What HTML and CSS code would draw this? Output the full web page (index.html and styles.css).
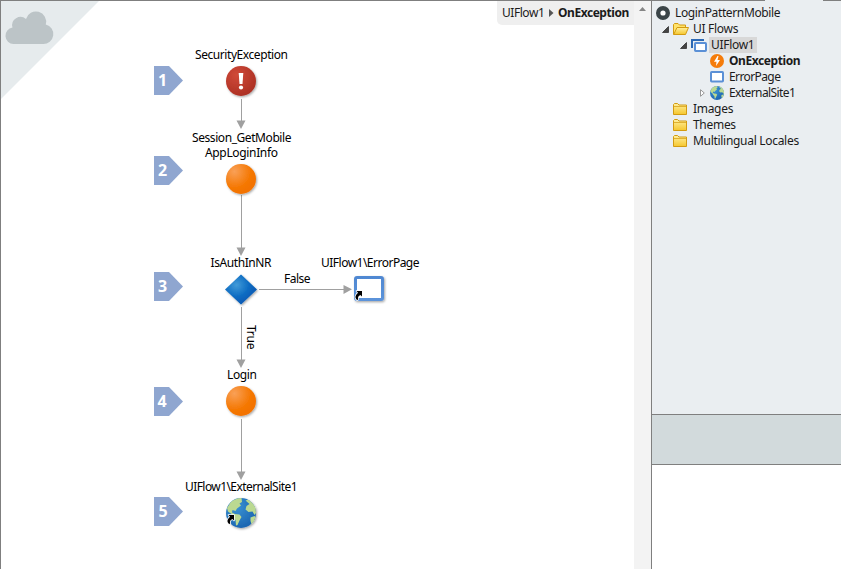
FILE: index.html
```html
<!DOCTYPE html>
<html lang="en">
<head>
<meta charset="utf-8">
<title>LoginPatternMobile</title>
<link rel="stylesheet" href="styles.css">
</head>
<body>
<svg width="0" height="0" class="defs">
  <defs>
    <radialGradient id="red" cx=".35" cy=".3" r=".75"><stop offset="0" stop-color="#d04a38"/><stop offset="1" stop-color="#ab2f23"/></radialGradient>
    <radialGradient id="orange" cx=".28" cy=".25" r=".7"><stop offset="0" stop-color="#f9a057"/><stop offset=".75" stop-color="#f57905"/><stop offset="1" stop-color="#f37300"/></radialGradient>
    <radialGradient id="blue" cx=".36" cy=".35" r=".6"><stop offset="0" stop-color="#429bd8"/><stop offset=".65" stop-color="#0c6bc2"/><stop offset="1" stop-color="#075cb6"/></radialGradient>
    <radialGradient id="sea" cx=".35" cy=".3" r=".75"><stop offset="0" stop-color="#3a93d3"/><stop offset="1" stop-color="#1a63b0"/></radialGradient>
    <linearGradient id="gold" x1="0" y1="0" x2="0" y2="1"><stop offset="0" stop-color="#fff0a0"/><stop offset="1" stop-color="#f5c62d"/></linearGradient>
    <linearGradient id="frame" x1="0" y1="0" x2="0" y2="1"><stop offset="0" stop-color="#5088d2"/><stop offset="1" stop-color="#5b93da"/></linearGradient>
    <filter id="shadow" x="-30%" y="-30%" width="170%" height="170%"><feDropShadow dx="1" dy="1.2" stdDeviation="1.3" flood-opacity=".35"/></filter>
    <symbol id="globe" viewBox="0 0 30 30">
      <circle cx="15" cy="15" r="15" fill="url(#sea)"/>
      <path fill="#bbd991" d="M4.500 4.500Q9 .2 15.500 0L16 4 13.500 5.500 15 7.500 11 10.500 9.500 13 6.500 12 6 14.500 9 16 13.500 16.500 15.500 19 13.500 22.500 11.500 27 10 27.500 9.500 22 6.500 18.500 5.500 16 2 13.500 1 10ZM19.500 2.500L22 1.700Q27 4.500 29.500 10L30 15 28.500 17 26.500 13.500 22.500 14 19.500 11.500 20.500 8 23.500 6ZM24.500 19.500L28.500 18 29.500 19Q28.500 23.500 25.500 26L24.500 23Z"/>
    </symbol>
    <symbol id="folder" viewBox="0 0 14 12">
      <path d="M.5 11.500V1.500L1.500.5H4.500L6 2H13.500V11.500Z" fill="url(#gold)" stroke="#d39b11"/><path d="M1 3.500H13" stroke="#d39b11" opacity=".7"/>
    </symbol>
    <symbol id="shortcut" viewBox="0 0 9 11" overflow="visible">
      <path d="M2.500 1H8V6.500L6.300 4.900Q3.200 6.300 4.300 9.300L3.200 10.200Q-.8 7 4 2.700Z" fill="#000" stroke="#fff" stroke-width="1.600" stroke-linejoin="round" paint-order="stroke"/>
    </symbol>
  </defs>
</svg>
<main class="workspace">
  <section class="canvas">
    <svg class="flow" width="633" height="568" viewBox="1 1 633 568">
      <path d="M1 1H99L1 99Z" fill="#e6ebed"/>
      <path d="M13.500 44A8.300 8.300 0 0 1 12.500 27.500A8.300 8.300 0 0 1 26 19A10 10 0 0 1 45.800 24.500A9.900 9.900 0 0 1 43 44Z" fill="#bcc4c7"/>
      <g class="step">
        <path d="M154 66H169L183 80.500 169 95H154Z"/><path d="M154 156H169L183 170.500 169 185H154Z"/><path d="M154 272H169L183 286.500 169 301H154Z"/><path d="M154 387H169L183 401.500 169 416H154Z"/><path d="M154 497H169L183 511.500 169 526H154Z"/>
        <text x="162.500" y="86">1</text><text x="162.500" y="176">2</text><text x="162.500" y="292">3</text><text x="162" y="407">4</text><text x="163" y="517">5</text>
      </g>
      <path d="M241.500 99V122M241.500 195V249M241.500 307V361M241.500 419V473M259 289.500H345" stroke="#a0a0a0" fill="none"/>
      <path d="M236.500 120.500H245.500L241 129ZM236.500 247.500H245.500L241 256ZM236.500 359.500H245.500L241 368ZM236.500 471.500H245.500L241 480ZM343.500 285V294L352 289.300Z" fill="#a0a0a0"/>
      <g class="label">
        <text x="195" y="59" textLength="93">SecurityException</text>
        <text><tspan x="192" y="142" textLength="99.500">Session_GetMobile</tspan><tspan x="205" y="157" textLength="73">AppLoginInfo</tspan></text>
        <text x="210.500" y="267" textLength="61">IsAuthInNR</text>
        <text x="321" y="267" textLength="98.500">UIFlow1\ErrorPage</text>
        <text x="284" y="283" textLength="26.500">False</text>
        <text transform="translate(247 325) rotate(90)" textLength="24.500">True</text>
        <text x="227" y="379" textLength="30">Login</text>
        <text x="185" y="491" textLength="112.500">UIFlow1\ExternalSite1</text>
      </g>
      <g filter="url(#shadow)">
        <circle cx="241" cy="81" r="15" fill="url(#red)"/>
        <circle cx="241" cy="179" r="15" fill="url(#orange)"/>
        <path d="M241 274.500L257 289.500 241 304.500 225 289.500Z" fill="url(#blue)"/>
        <circle cx="241" cy="401" r="15" fill="url(#orange)"/>
        <use href="#globe" x="226" y="498" width="30" height="30"/>
        <rect x="355.500" y="277.500" width="27" height="22" rx="1.500" fill="#fff" stroke="url(#frame)" stroke-width="3"/>
      </g>
      <path d="M238.700 73H243.300L242.500 84H239.500Z" fill="#fff"/><circle cx="241" cy="87.500" r="2.100" fill="#fff"/>
      <use href="#shortcut" x="354" y="290" width="9" height="11"/>
      <use href="#shortcut" x="226" y="514" width="9" height="11"/>
    </svg>
    <nav class="crumbs"><span class="crumb">UIFlow1</span><svg width="5" height="8" viewBox="0 0 5 8"><path d="M0 0L4.500 4 0 8Z" fill="#555"/></svg><b class="current">OnException</b></nav>
  </section>
  <div class="scroll"><svg width="7" height="4" viewBox="0 0 7 4"><path d="M0 4L3.500 0 7 4Z" fill="#858585"/></svg></div>
  <aside class="side">
    <div class="tree">
      <div class="row root"><svg width="14" height="14" viewBox="0 0 14 14"><circle cx="7" cy="7" r="4.800" fill="#fff" stroke="#3b4548" stroke-width="4.400"/></svg><span class="t-root">LoginPatternMobile</span></div>
      <div class="row l1"><svg class="twist" width="7" height="7" viewBox="0 0 7 7"><path d="M6.500.5V6.500H.5Z" fill="#444" stroke="#222" stroke-width=".7"/></svg><svg width="16" height="12" viewBox="0 0 16 12"><path d="M.5 11.500V1.500L1.500.5H5L6.500 2H12.500V5" fill="#ffe36b" stroke="#d39b11"/><path d="M.7 11.500L4 4.500H15.500L12.500 11.500Z" fill="url(#gold)" stroke="#d39b11"/></svg><span class="t-flows">UI Flows</span></div>
      <div class="row l2"><svg class="twist" width="7" height="7" viewBox="0 0 7 7"><path d="M6.500.5V6.500H.5Z" fill="#444" stroke="#222" stroke-width=".7"/></svg><svg width="16" height="13" viewBox="0 0 16 13"><path d="M1 9V1H13" fill="none" stroke="#2c69b5" stroke-width="2"/><rect x="4" y="4" width="11" height="8" rx=".7" fill="#fff" stroke="#5b90d6" stroke-width="2"/></svg><span class="selected">UIFlow1</span></div>
      <div class="row l3"><svg width="14" height="14" viewBox="0 0 14 14"><circle cx="7" cy="7" r="7" fill="#f57c0b"/><path d="M7.500 2L4 7.700H6.500L6 12 10 6H7.500L8.500 2Z" fill="#fff"/></svg><b class="t-exc">OnException</b></div>
      <div class="row l3"><svg width="14" height="12" viewBox="0 0 14 12"><rect x="1" y="1" width="12" height="9.500" rx=".7" fill="#fff" stroke="#5b90d6" stroke-width="2"/></svg><span class="t-err">ErrorPage</span></div>
      <div class="row l3 site"><svg class="closed" width="5" height="8" viewBox="0 0 5 8"><path d="M.5.7V7.300L4.300 4Z" fill="#fff" stroke="#999"/></svg><svg width="14" height="14"><use href="#globe" width="14" height="14"/></svg><span class="t-ext">ExternalSite1</span></div>
      <div class="row folder"><svg width="14" height="12"><use href="#folder"/></svg><span class="t-img">Images</span></div>
      <div class="row folder"><svg width="14" height="12"><use href="#folder"/></svg><span class="t-themes">Themes</span></div>
      <div class="row folder"><svg width="14" height="12"><use href="#folder"/></svg><span class="t-loc">Multilingual Locales</span></div>
    </div>
    <div class="band"></div>
  </aside>
</main>
</body>
</html>
```
FILE: styles.css
```css
* { box-sizing: border-box; }
body { margin: 0; background: #fff; font: 12px/16px "Noto Sans", "Open Sans", sans-serif; color: #1b1b1b; overflow: hidden; }
.defs { position: absolute; }
.workspace { display: grid; grid-template-columns: 634px 17px 190px; height: 569px; }
.canvas { position: relative; border-top: 1px solid #7f7f7f; border-left: 1px solid #7f7f7f; }
.flow { display: block; }
.label { font-size: 12px; fill: #000; }
.step { fill: #8fa6d0; }
.step text { fill: #fff; font: bold 16px "Open Sans", sans-serif; text-anchor: middle; }
.crumbs { position: absolute; top: 0; right: 0; width: 137px; height: 24px; padding-left: 5px; display: flex; align-items: center; gap: 5px; background: #efefef; border-bottom-left-radius: 5px; }
.crumb { width: 42px; letter-spacing: -.45px; }
.current { letter-spacing: -.45px; margin-left: -1px; }
.scroll { border-top: 1px solid #7f7f7f; background: #f3f3f3; padding: 6px 0 0 5px; }
.scroll svg { display: block; }
.side { border-left: 1px solid #7f7f7f; display: flex; flex-direction: column; }
.tree { height: 414px; padding-top: 5px; background: linear-gradient(#7f7f7f, #7f7f7f) 0 0 / 113px 1px no-repeat, linear-gradient(#7f7f7f, #7f7f7f) 100% 0 / 18px 1px no-repeat, #eaeef1; }
.band { height: 51px; border-top: 1px solid #7f7f7f; border-bottom: 1px solid #7f7f7f; background: #d2dadc; }
.row { display: flex; align-items: center; height: 16px; white-space: nowrap; letter-spacing: -.3px; }
.row svg { flex: none; margin-right: 5px; }
.root { padding-left: 4px; }
.l1 { padding-left: 10px; }
.l2 { padding-left: 28px; }
.l3 { padding-left: 58px; }
.site { padding-left: 48px; }
.folder { padding-left: 21px; }
.folder svg { margin-right: 6px; }
.row .twist { margin-right: 4px; }
.row .closed { margin-right: 5px; }
.row .selected { background: #d8d8d8; margin-left: -3px; padding: 0 3px 0 2px; height: 16px; }
.t-root { letter-spacing: -.36px; }
.t-flows { margin-left: -1px; }
.t-exc { letter-spacing: -.42px; }
.t-err { letter-spacing: -.6px; }
.t-ext { letter-spacing: -.6px; }
```
